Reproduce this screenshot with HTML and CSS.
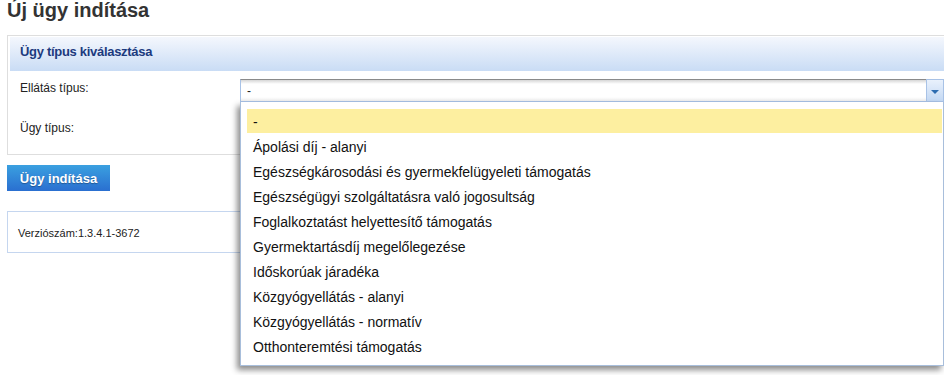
FILE: index.html
```html
<!DOCTYPE html>
<html lang="hu">
<head>
    <meta charset="UTF-8">
    <meta name="viewport" content="width=device-width, initial-scale=1.0">
    <title>Új ügy indítása</title>
    <link rel="stylesheet" href="styles.css">
</head>
<body>
    <div class="page">
        <h1 class="page-title">Új ügy indítása</h1>

        <div class="panel">
            <div class="panel-head">Ügy típus kiválasztása</div>
            <div class="panel-body">
                <div class="form-row">
                    <label class="form-label">Ellátás típus:</label>
                    <div class="combo">
                        <div class="combo-input">-</div>
                        <div class="combo-btn"><span class="combo-arrow"></span></div>

                        <ul class="combo-list">
                            <li class="combo-item selected">-</li>
                            <li class="combo-item">Ápolási díj - alanyi</li>
                            <li class="combo-item">Egészségkárosodási és gyermekfelügyeleti támogatás</li>
                            <li class="combo-item">Egészségügyi szolgáltatásra való jogosultság</li>
                            <li class="combo-item">Foglalkoztatást helyettesítő támogatás</li>
                            <li class="combo-item">Gyermektartásdíj megelőlegezése</li>
                            <li class="combo-item">Időskorúak járadéka</li>
                            <li class="combo-item">Közgyógyellátás - alanyi</li>
                            <li class="combo-item">Közgyógyellátás - normatív</li>
                            <li class="combo-item">Otthonteremtési támogatás</li>
                        </ul>
                    </div>
                </div>
                <div class="form-row">
                    <label class="form-label">Ügy típus:</label>
                    <div class="combo combo-empty"></div>
                </div>
            </div>
        </div>

        <button type="button" class="btn">Ügy indítása</button>

        <div class="version">Verziószám:1.3.4.1-3672</div>
    </div>
</body>
</html>
```

FILE: styles.css
```css
* {
  box-sizing: border-box;
}

html {
  overflow: hidden;
}

body {
  margin: 0;
  min-height: 375px;
  font-family: "Liberation Sans", Arial, sans-serif;
  color: #222;
  background: #fff;
}

.page {
  width: 960px;
  padding: 0 7px;
}

.page-title {
  margin: 0;
  height: 35px;
  font-size: 20px;
  line-height: 20px;
  font-weight: bold;
  color: #333;
}

/* panel with the two selects */
.panel {
  border: 1px solid #dedede;
  padding: 1px 2px;
}

.panel-head {
  height: 34px;
  padding: 0 10px;
  line-height: 30px;
  font-size: 13px;
  letter-spacing: -0.3px;
  font-weight: bold;
  color: #1c3a7e;
  background: linear-gradient(to bottom, #f4f7fd 0%, #c9dcf5 100%);
}

.panel-body {
  padding: 8px 0 11px 10px;
  display: flex;
  flex-direction: column;
  gap: 17px;
}

.form-row {
  display: flex;
  height: 23px;
}

.form-label {
  width: 220px;
  flex: none;
  font-size: 12px;
  line-height: 18px;
  color: #222;
}

.combo {
  position: relative;
  display: flex;
  width: 704px;
  height: 23px;
}

.combo-input {
  flex: 1;
  padding: 4px 6px 0;
  font-size: 12px;
  border: 1px solid #a8c2e6;
  border-top-color: #8a8a8a;
  border-right: none;
  background: linear-gradient(to bottom, #d6d6d6 0px, #fff 4px, #fff 17px, #ededed 100%);
}

.combo-btn {
  width: 18px;
  display: flex;
  align-items: center;
  justify-content: center;
  border: 1px solid #a8c2e6;
  background: linear-gradient(to bottom, #e9f1fc 0%, #c3d8f3 100%);
}

.combo-arrow {
  width: 0;
  height: 0;
  margin-top: 2px;
  border-left: 4px solid transparent;
  border-right: 4px solid transparent;
  border-top: 4px solid #2d6cb0;
}

/* opened list lies over the rest of the page */
.combo-list {
  position: absolute;
  top: 100%;
  left: 0;
  right: 0;
  margin: 0;
  padding: 7px 1px 6px 6px;
  list-style: none;
  background: #fff;
  border: 1px solid #a8bedb;
  border-top: none;
  box-shadow: -3px 4px 6px rgba(0, 0, 0, 0.45);
  z-index: 5;
}

.combo-item {
  height: 24px;
  margin-bottom: 1px;
  padding: 0 6px;
  line-height: 26px;
  font-size: 14px;
  color: #111;
  white-space: nowrap;
}

.combo-item.selected {
  background: #fdefa0;
}

.btn {
  display: block;
  margin-top: 10px;
  width: 103px;
  height: 26px;
  padding: 0;
  border: none;
  font-family: "Liberation Sans", Arial, sans-serif;
  font-size: 13px;
  font-weight: bold;
  color: #fff;
  text-shadow: 0 1px 1px rgba(0, 0, 0, 0.3);
  background: linear-gradient(to bottom, #3aa0e0 0%, #2a6fd0 100%);
}

.version {
  margin-top: 20px;
  height: 42px;
  padding: 0 10px;
  line-height: 42px;
  font-size: 11px;
  color: #222;
  border: 1px solid #c5d6ef;
}
```
